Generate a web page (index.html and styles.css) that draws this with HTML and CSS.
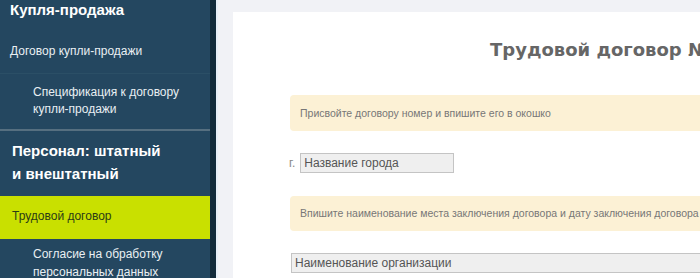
FILE: index.html
```html
<!DOCTYPE html>
<html lang="ru">
<head>
    <meta charset="UTF-8">
    <meta name="viewport" content="width=device-width, initial-scale=1.0">
    <title>Трудовой договор</title>
    <link rel="stylesheet" href="styles.css">
</head>
<body>
    <nav class="sidebar">
        <div class="group-title first">Купля-продажа</div>
        <a class="item">Договор купли-продажи</a>
        <a class="item sub last">Спецификация к договору<br>купли-продажи</a>
        <div class="group-title">Персонал: штатный<br>и внештатный</div>
        <a class="item active">Трудовой договор</a>
        <a class="item sub">Согласие на обработку<br>персональных данных</a>
    </nav>

    <main class="main">
        <div class="card">
            <h1 class="title">Трудовой договор №</h1>
            <div class="note">Присвойте договору номер и впишите его в окошко</div>
            <div class="city-row">
                <span class="prefix">г.</span>
                <input class="field city" type="text" value="Название города">
            </div>
            <div class="note second">Впишите наименование места заключения договора и дату заключения договора</div>
            <input class="field org" type="text" value="Наименование организации">
        </div>
    </main>
</body>
</html>
```

FILE: styles.css
```css
body {
    margin: 0;
    height: 278px;
    display: flex;
    overflow: hidden;
    font-family: 'Liberation Sans', Arial, sans-serif;
    background: #f1f2f6;
}
.sidebar {
    width: 210px;
    flex-shrink: 0;
    background: #244760;
    border-right: 6px solid #132b3b;
    display: flex;
    flex-direction: column;
    overflow: hidden;
}
.group-title {
    color: #ffffff;
    font-weight: bold;
    font-size: 15px;
    line-height: 23px;
    padding: 8px 10px 11px 12px;
}
.group-title.first {
    line-height: 20px;
    padding: 0 10px 11px 10px;
}
.item {
    display: block;
    color: #e9eff3;
    font-size: 12px;
    line-height: 17px;
    padding: 12px 10px 13px 10px;
    border-bottom: 1px solid #2b4f66;
}
.item.sub {
    padding: 10px 10px 11px 33px;
}
.item.last {
    border-bottom: 2px solid #566f80;
}
.item.active {
    background: #c9e000;
    color: #2c3c16;
    padding: 12px 10px 14px 12px;
    border-bottom: none;
    margin-right: -6px;
    border-right: 6px solid #8c9d06;
}
.item.sub:last-child {
    line-height: 18px;
    padding-top: 6px;
    border-bottom: none;
}
.main {
    flex: 1;
    border-left: 2px solid #e8eff7;
    padding: 12px 0 0 15px;
    overflow: hidden;
}
.card {
    background: #ffffff;
    width: 800px;
    height: 100%;
    padding: 26px 0 0 57px;
    box-sizing: border-box;
}
.title {
    margin: 0 0 33px 200px;
    font-family: 'DejaVu Sans', Verdana, sans-serif;
    font-size: 18px;
    line-height: 24px;
    color: #666666;
    white-space: nowrap;
}
.note {
    background: #fcf1d5;
    border-radius: 4px;
    color: #777777;
    font-size: 10.5px;
    line-height: 36px;
    padding: 0 10px;
}
.note.second {
    line-height: 35px;
    margin-top: 23px;
}
.city-row {
    display: flex;
    align-items: center;
    gap: 5px;
    margin-top: 22px;
    margin-left: -1px;
}
.prefix {
    color: #888888;
    font-size: 12px;
}
.field {
    height: 20px;
    box-sizing: border-box;
    border: 1px solid #c4c4c4;
    background: #efefef;
    color: #555555;
    font-family: 'Liberation Sans', Arial, sans-serif;
    font-size: 12px;
    padding: 0 3px;
    margin: 0;
}
.city {
    width: 154px;
}
.org {
    display: block;
    margin: 22px 0 0 1px;
    width: 700px;
}
```
